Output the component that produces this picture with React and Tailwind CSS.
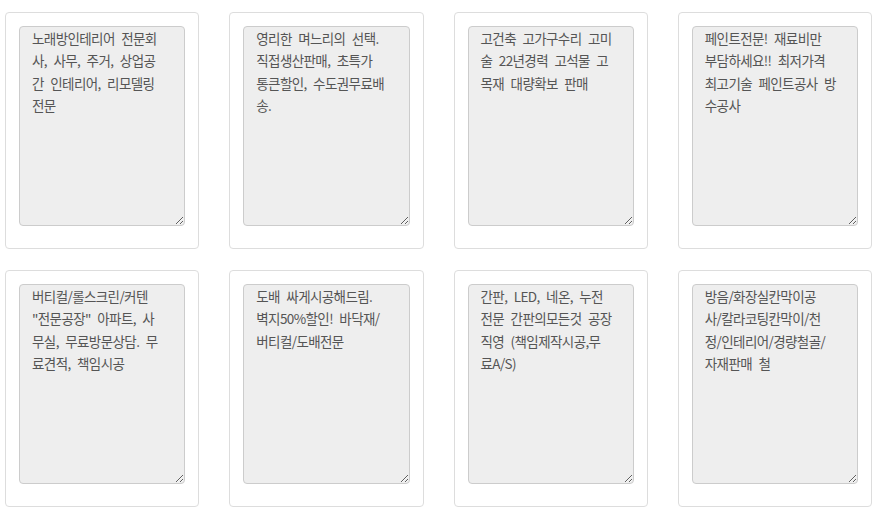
import React from "react";

const items = [
  "노래방인테리어 전문회\n사, 사무, 주거, 상업공\n간 인테리어, 리모델링\n전문",
  "영리한 며느리의 선택.\n직접생산판매, 초특가\n통큰할인, 수도권무료배\n송.",
  "고건축 고가구수리 고미\n술 22년경력 고석물 고\n목재 대량확보 판매",
  "페인트전문! 재료비만\n부담하세요!! 최저가격\n최고기술 페인트공사 방\n수공사",
  "버티컬/롤스크린/커텐\n\"전문공장\" 아파트, 사\n무실, 무료방문상담. 무\n료견적, 책임시공",
  "도배 싸게시공해드림.\n벽지50%할인! 바닥재/\n버티컬/도배전문",
  "간판, LED, 네온, 누전\n전문 간판의모든것 공장\n직영 (책임제작시공,무\n료A/S)",
  "방음/화장실칸막이공\n사/칼라코팅칸막이/천\n정/인테리어/경량철골/\n자재판매 철",
];

export default function App() {
  return (
    <div className="w-[876px] h-[512px] bg-white overflow-hidden">
      <div className="grid grid-cols-4 gap-x-[30px] gap-y-[21px] pl-[5px] pr-[4px] pt-[12px]">
        {items.map((t, i) => (
          <div
            key={i}
            className="border border-[#dddddd] rounded-[4px] pt-[13px] pl-[13px] pr-[13px] pb-[22px] bg-white"
          >
            <textarea
              readOnly
              wrap="off"
              defaultValue={t}
              className="block w-full h-[200px] bg-[#eeeeee] border border-[#cccccc] rounded-[4px] px-[12px] pt-0 text-[13.5px] leading-[22.3px] tracking-[-0.6px] [word-spacing:4px] text-[#555555] outline-none overflow-hidden"
              style={{ fontFamily: '"Noto Sans CJK KR", "Noto Sans", sans-serif' }}
            />
          </div>
        ))}
      </div>
    </div>
  );
}
